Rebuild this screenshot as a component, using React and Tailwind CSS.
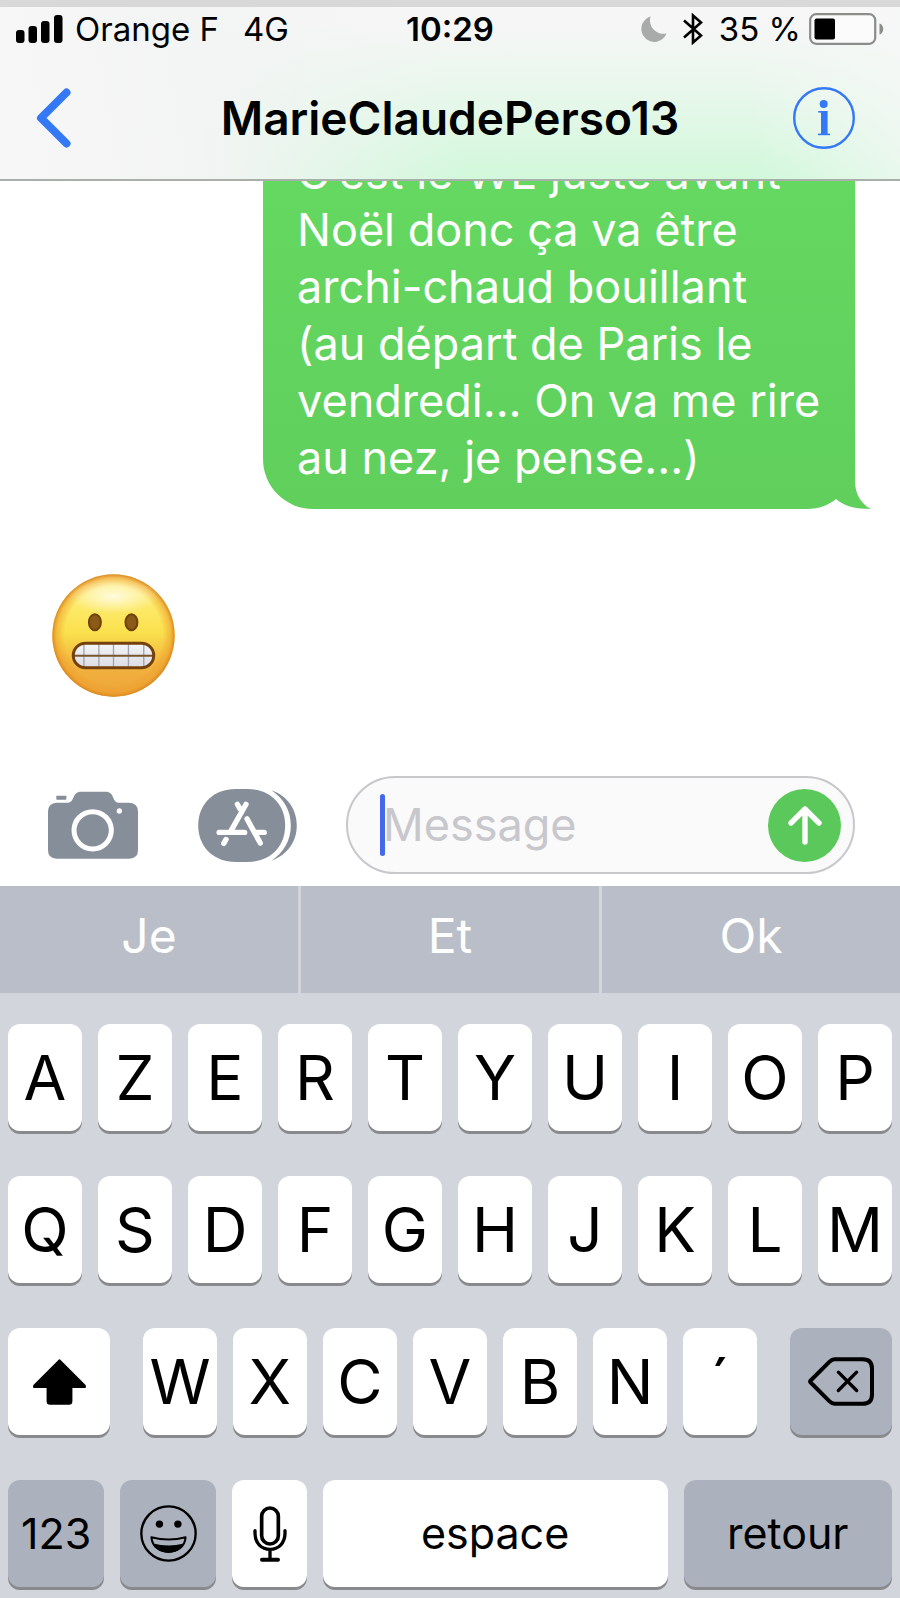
import { useState } from "react";

const firstRow = ["A", "Z", "E", "R", "T", "Y", "U", "I", "O", "P"];
const secondRow = ["Q", "S", "D", "F", "G", "H", "J", "K", "L", "M"];
const thirdRow = ["W", "X", "C", "V", "B", "N", "´"];
const suggestions = ["Je", "Et", "Ok"];

const lightKey =
  "h-[107px] min-w-0 rounded-xl bg-white text-black flex justify-center items-center shadow-[0_3px_0_#88898d]";
const darkKey =
  "h-[107px] min-w-0 rounded-xl bg-[#acb2bd] text-black flex justify-center items-center shadow-[0_3px_0_#88898d]";

const SignalIcon = () => (
  <svg viewBox="0 0 47 28" className="w-[47px] h-7" fill="#000">
    <rect x="0" y="15" width="8.5" height="13" rx="3" />
    <rect x="12.5" y="11" width="8.5" height="17" rx="3" />
    <rect x="25" y="6" width="8.5" height="22" rx="3" />
    <rect x="38" y="0" width="8.5" height="28" rx="3" />
  </svg>
);

const MoonIcon = () => (
  <svg viewBox="0 0 26 26" className="w-[26px] h-[26px]" fill="#a9aaaa">
    <path d="M9.5 0.5A13 13 0 1 0 25.5 17.5A13.5 13.5 0 0 1 9.5 0.5Z" />
  </svg>
);

const BluetoothIcon = () => (
  <svg
    viewBox="0 0 20 32"
    className="w-5 h-8"
    fill="none"
    stroke="#000"
    strokeWidth="2.6"
  >
    <path d="M1 7.5L18 22.5L10 29.5V2.5L18 9.5L1 24.5" />
  </svg>
);

const BatteryIcon = () => (
  <svg viewBox="0 0 75 32" className="w-[75px] h-8">
    <rect
      x="1.2"
      y="1.2"
      width="65"
      height="29.6"
      rx="6"
      fill="#fff"
      fillOpacity="0.5"
      stroke="#8b8d8b"
      strokeWidth="2.2"
    />
    <rect x="5.5" y="5.5" width="20.5" height="21" rx="2" fill="#000" />
    <path d="M70.5 10.5C75.5 12 75.5 20 70.5 21.5Z" fill="#8b8d8b" />
  </svg>
);

const BackIcon = () => (
  <svg
    viewBox="0 0 36 60"
    className="w-9 h-[60px]"
    fill="none"
    stroke="#3478f6"
    strokeWidth="8"
    strokeLinecap="round"
    strokeLinejoin="round"
  >
    <path d="M30.5 4.5L5 30L30.5 55.5" />
  </svg>
);

const InfoIcon = () => (
  <svg viewBox="0 0 62 62" className="w-[62px] h-[62px]" fill="#3478f6">
    <circle cx="31" cy="31" r="29.8" fill="none" stroke="#3478f6" strokeWidth="2.4" />
    <circle cx="30.7" cy="17" r="4" />
    <rect x="28" y="24" width="6.6" height="24" />
    <rect x="25.2" y="24" width="6" height="1.6" />
    <rect x="25" y="46.6" width="12" height="1.6" />
  </svg>
);

const CameraIcon = () => (
  <svg viewBox="0 0 270 204" className="w-[90px] h-[68px]" fill="#868e99">
    <rect x="25" y="14" width="30" height="12" rx="2" />
    <path d="M26 35H58C82 35 70 2 100 2H172C202 2 190 35 214 35H244Q270 36 270 62V177Q270 203 244 203H26Q0 203 0 177V62Q0 36 26 35Z" />
    <circle cx="134" cy="118" r="56" fill="none" stroke="#fff" strokeWidth="15" />
    <circle cx="214" cy="60" r="8" fill="#fff" />
  </svg>
);

const AppStoreIcon = () => (
  <svg viewBox="0 0 297 220" className="w-[99px] h-[73px]" fill="#868e99">
    <path d="M100 1C120 0 142 0 162 1C222 6 262 50 262 110S222 214 162 219C142 220 120 220 100 219C40 214 0 170 0 110S40 6 100 1Z" />
    <path d="M221 4C270 22 297 62 297 110S270 198 221 216C258 190 279 155 279 110S258 30 221 4Z" />
    <g fill="none" stroke="#fff" strokeWidth="16" strokeLinecap="round">
      <path d="M118 46L126 60" />
      <path d="M144 46L100 124" />
      <path d="M63 131H140" />
      <path d="M84 152L77 164" />
      <path d="M147 90L187 163" />
      <path d="M176 131H199" />
    </g>
  </svg>
);

const SendIcon = () => (
  <svg
    viewBox="0 0 36 40"
    className="w-9 h-10"
    fill="none"
    stroke="#fff"
    strokeWidth="5.4"
    strokeLinecap="round"
    strokeLinejoin="round"
  >
    <path d="M18 37V4M4 18L18 4L32 18" />
  </svg>
);

const GrimaceFace = () => (
  <svg viewBox="0 0 370 370" className="w-[123px] h-[123px]" role="img" aria-label="Grimace">
    <defs>
      <linearGradient id="skin" x1="0" y1="0" x2="0" y2="1">
        <stop offset="0" stopColor="#fff3a4" />
        <stop offset="0.22" stopColor="#fdec6e" />
        <stop offset="0.48" stopColor="#fae04d" />
        <stop offset="0.72" stopColor="#f2b53f" />
        <stop offset="1" stopColor="#eda33a" />
      </linearGradient>
      <radialGradient id="rim">
        <stop offset="0.8" stopColor="#ee9a27" stopOpacity="0" />
        <stop offset="0.93" stopColor="#ef9f2b" stopOpacity="0.55" />
        <stop offset="1" stopColor="#d9861f" stopOpacity="0.95" />
      </radialGradient>
      <radialGradient id="shine">
        <stop offset="0" stopColor="#fff" stopOpacity="0.75" />
        <stop offset="1" stopColor="#fff" stopOpacity="0" />
      </radialGradient>
      <linearGradient id="teeth" x1="0" y1="0" x2="0" y2="1">
        <stop offset="0" stopColor="#f4f5f8" />
        <stop offset="1" stopColor="#dcdde4" />
      </linearGradient>
    </defs>
    <circle cx="185" cy="185" r="184" fill="url(#skin)" />
    <circle cx="185" cy="185" r="184" fill="url(#rim)" />
    <ellipse cx="185" cy="68" rx="135" ry="52" fill="url(#shine)" />
    <g fill="#8a5a17" stroke="#704208" strokeWidth="6">
      <ellipse cx="129" cy="145" rx="18" ry="24" />
      <ellipse cx="239" cy="145" rx="18" ry="24" />
    </g>
    <rect x="64" y="208" width="242" height="74" rx="37" fill="url(#teeth)" />
    <path
      d="M96 210V280M141 210V280M185 210V280M230 210V280M276 210V280"
      stroke="#a2a4ad"
      strokeWidth="4"
    />
    <path d="M66 246H304" stroke="#7a5630" strokeWidth="6" />
    <rect x="64" y="208" width="242" height="74" rx="37" fill="none" stroke="#74400b" strokeWidth="9" />
  </svg>
);

const BubbleTail = () => (
  <svg viewBox="0 0 64 28" className="absolute -right-4 bottom-0 w-16 h-7">
    <path d="M46 0H48C48 13 54 23 64 28H46Z" fill="#60cf5c" />
    <path d="M0 28C12 28 22 24 29 18C37 25 48 28 64 28V29H0Z" fill="#fff" />
  </svg>
);

const ShiftIcon = () => (
  <svg viewBox="0 0 158 137" className="w-[53px] h-[46px]">
    <path
      d="M79 3L155 79V84H115V126Q115 134 107 134H51Q43 134 43 126V84H3V79Z"
      stroke="#000"
      strokeWidth="5"
      strokeLinejoin="round"
    />
  </svg>
);

const BackspaceIcon = () => (
  <svg
    viewBox="0 0 198 146"
    className="w-[66px] h-[49px]"
    fill="none"
    stroke="#000"
    strokeWidth="12"
    strokeLinecap="round"
    strokeLinejoin="round"
  >
    <path d="M80 6H164Q192 6 192 34V112Q192 140 164 140H80Q72 140 64 132L8 76Q5 73 8 70L64 14Q72 6 80 6Z" />
    <path d="M91 45L146 100M146 45L91 100" strokeWidth="10" />
  </svg>
);

const SmileyIcon = () => (
  <svg viewBox="0 0 170 170" className="w-[57px] h-[57px]">
    <circle cx="85" cy="85" r="81" fill="none" stroke="#000" strokeWidth="7" />
    <circle cx="58" cy="57" r="11" />
    <circle cx="113" cy="57" r="11" />
    <path
      d="M34 96Q85 110 136 96C134 124 112 140 85 140S36 124 34 96Z"
      fill="#acb2bd"
      stroke="#000"
      strokeWidth="6"
      strokeLinejoin="round"
    />
    <path d="M39 115Q85 126 131 115C124 132 106 142 85 142S46 132 39 115Z" />
  </svg>
);

const MicIcon = () => (
  <svg
    viewBox="0 0 102 168"
    className="w-[34px] h-14"
    fill="none"
    stroke="#000"
    strokeWidth="11"
    strokeLinecap="round"
  >
    <rect x="26" y="6" width="50" height="108" rx="25" />
    <path d="M6 74V82C6 112 26 130 51 130S96 112 96 82V74M51 130V158" strokeWidth="10" />
    <path d="M27 161H75" strokeWidth="12" />
  </svg>
);

const LetterKey = ({ letter, onPress }) => (
  <button type="button" className={`${lightKey} text-[62px]`} onClick={() => onPress(letter)}>
    {letter}
  </button>
);

const App = () => {
  const [message, setMessage] = useState("");
  const type = (text) => setMessage((prev) => prev + text);

  return (
    <div className="w-full bg-white font-[Inter,sans-serif] text-black overflow-hidden">
      <header className="border-t-[7px] border-t-[#d8d8d8] border-b-2 border-b-[#a9b0aa] bg-[linear-gradient(80deg,#f7f7f7_0%,#f3f4f4_22%,rgba(243,245,244,0)_50%,rgba(246,248,247,0)_82%,rgba(246,248,247,0.75)_100%),linear-gradient(180deg,#f6f6f6_10%,#eaf7ed_45%,#d2f8db_100%)]">
        <div className="grid grid-cols-[1fr_auto_1fr] items-center h-11 mb-1.5 px-4 text-[33px] leading-none">
          <div className="flex items-center gap-3">
            <SignalIcon />
            <span className="whitespace-nowrap">Orange F</span>
            <span className="ml-3">4G</span>
          </div>
          <span className="font-semibold">10:29</span>
          <div className="flex items-center justify-end gap-2">
            <MoonIcon />
            <span className="mx-2">
              <BluetoothIcon />
            </span>
            <span className="whitespace-nowrap">35 %</span>
            <BatteryIcon />
          </div>
        </div>
        <nav className="flex items-center justify-between h-[122px] pl-9 pr-[45px]">
          <button type="button" aria-label="Retour" className="w-[71px]">
            <BackIcon />
          </button>
          <h1 className="text-[46px] font-semibold">MarieClaudePerso13</h1>
          <button type="button" aria-label="Informations">
            <InfoIcon />
          </button>
        </nav>
      </header>

      <main className="overflow-hidden">
        <div className="relative -mt-[37px] ml-auto mr-[45px] w-[592px] rounded-bl-[50px] bg-linear-to-b from-[#65d961] to-[#60cf5c] pl-[34px] pr-4 pb-[23px] text-[45px] leading-[57px] text-white">
          <p>
            C’est le WE juste avant
            <br />
            Noël donc ça va être
            <br />
            archi-chaud bouillant
            <br />
            (au départ de Paris le
            <br />
            vendredi... On va me rire
            <br />
            au nez, je pense...)
          </p>
          <BubbleTail />
        </div>
        <div className="mt-[65px] ml-[52px] mb-[79px]">
          <GrimaceFace />
        </div>
      </main>

      <form
        className="flex items-center pl-12 pr-[45px] pb-3"
        onSubmit={(e) => e.preventDefault()}
      >
        <button type="button" aria-label="Appareil photo">
          <CameraIcon />
        </button>
        <button type="button" aria-label="Applications" className="ml-[60px]">
          <AppStoreIcon />
        </button>
        <div className="relative ml-[49px] flex flex-1 min-w-0 items-center h-[98px] rounded-full border-2 border-[#c7c7cc] bg-[#fafafa] pl-[35px] pr-3">
          <span className="absolute left-8 h-[62px] w-[5px] rounded-full bg-[#4668ea]" />
          <input
            type="text"
            aria-label="Message"
            placeholder="Message"
            value={message}
            onChange={(e) => setMessage(e.target.value)}
            className="flex-1 min-w-0 bg-transparent text-[45px] outline-none placeholder:text-[#c7c7cc]"
          />
          <button
            type="submit"
            aria-label="Envoyer"
            className="w-[73px] h-[73px] rounded-full bg-[#5ac85a] flex justify-center items-center"
          >
            <SendIcon />
          </button>
        </div>
      </form>

      <div className="grid grid-cols-3 gap-[3px] h-[107px] bg-[#d2d5db] text-white text-[48px]">
        {suggestions.map((word) => (
          <button key={word} type="button" className="bg-[#b9bec8] pb-2" onClick={() => type(word)}>
            {word}
          </button>
        ))}
      </div>

      <div className="bg-[#d2d5db] px-2 pt-[31px] pb-[11px] flex flex-col gap-[45px]">
        <div className="grid grid-cols-10 gap-4">
          {firstRow.map((letter) => (
            <LetterKey key={letter} letter={letter} onPress={type} />
          ))}
        </div>
        <div className="grid grid-cols-10 gap-4">
          {secondRow.map((letter) => (
            <LetterKey key={letter} letter={letter} onPress={type} />
          ))}
        </div>
        <div className="flex gap-[33px]">
          <button type="button" aria-label="Majuscule" className={`${lightKey} flex-[102]`}>
            <ShiftIcon />
          </button>
          <div className="grid grid-cols-7 gap-4 flex-[614]">
            {thirdRow.map((letter) => (
              <LetterKey key={letter} letter={letter} onPress={type} />
            ))}
          </div>
          <button
            type="button"
            aria-label="Effacer"
            className={`${darkKey} flex-[102]`}
            onClick={() => setMessage((prev) => prev.slice(0, -1))}
          >
            <BackspaceIcon />
          </button>
        </div>
        <div className="flex gap-4 text-[43px]">
          <button type="button" className={`${darkKey} flex-[48]`}>
            123
          </button>
          <button type="button" aria-label="Emoji" className={`${darkKey} flex-[48]`}>
            <SmileyIcon />
          </button>
          <button type="button" aria-label="Dictée" className={`${lightKey} flex-[37]`}>
            <MicIcon />
          </button>
          <button type="button" className={`${lightKey} flex-[172]`} onClick={() => type(" ")}>
            espace
          </button>
          <button type="button" className={`${darkKey} flex-[104]`}>
            retour
          </button>
        </div>
      </div>
    </div>
  );
};

export default App;
